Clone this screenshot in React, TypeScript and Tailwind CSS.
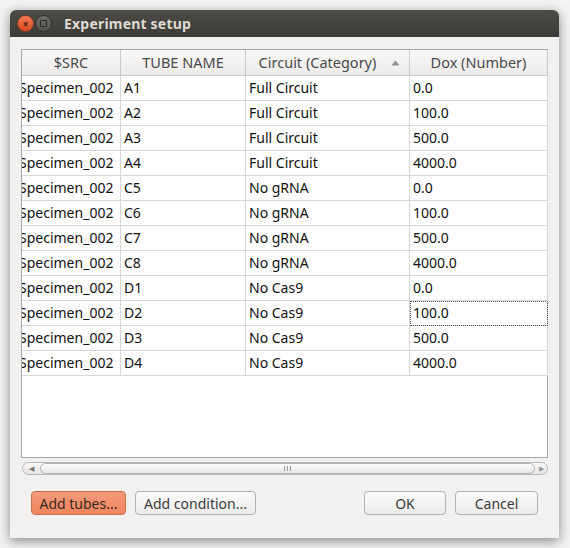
const rows = [
  ['Specimen_002', 'A1', 'Full Circuit', '0.0'],
  ['Specimen_002', 'A2', 'Full Circuit', '100.0'],
  ['Specimen_002', 'A3', 'Full Circuit', '500.0'],
  ['Specimen_002', 'A4', 'Full Circuit', '4000.0'],
  ['Specimen_002', 'C5', 'No gRNA', '0.0'],
  ['Specimen_002', 'C6', 'No gRNA', '100.0'],
  ['Specimen_002', 'C7', 'No gRNA', '500.0'],
  ['Specimen_002', 'C8', 'No gRNA', '4000.0'],
  ['Specimen_002', 'D1', 'No Cas9', '0.0'],
  ['Specimen_002', 'D2', 'No Cas9', '100.0'],
  ['Specimen_002', 'D3', 'No Cas9', '500.0'],
  ['Specimen_002', 'D4', 'No Cas9', '4000.0'],
];

const headers = ['$SRC', 'TUBE NAME', 'Circuit (Category)', 'Dox (Number)'];

const Button = ({ label, primary, w }: { label: string; primary?: boolean; w: string }) => (
  <button
    className={`${w} h-[24px] rounded-[4px] border text-[14px] flex items-center justify-center ${
      primary
        ? 'bg-gradient-to-b from-[#f59a79] to-[#ee8660] border-[#c9714f] text-[#3a2a22]'
        : 'bg-gradient-to-b from-[#fbfbfa] to-[#ecebea] border-[#b3b1ae] text-[#3c3c3c]'
    }`}
  >
    {label}
  </button>
);

const App = () => {
  return (
    <div className="w-[570px] h-[548px] bg-[#f3f3f3] pt-[10px] pl-[10px] overflow-hidden" style={{ fontFamily: '"Noto Sans", "Open Sans", sans-serif' }}>
      <div className="w-[549px] h-[528px] flex flex-col bg-[#f2f1f0] rounded-t-[6px] shadow-[0_3px_12px_rgba(0,0,0,0.45)]">
        {/* Title bar */}
        <div className="h-[27px] shrink-0 rounded-t-[6px] bg-gradient-to-b from-[#4d4c47] to-[#3b3a36] flex items-center pl-[7px]">
          <div className="w-[17px] h-[17px] rounded-full bg-gradient-to-b from-[#f37a52] to-[#d9481c] border border-[#8a3a22] flex items-center justify-center text-[#4a1a0c] text-[10px] leading-none font-bold">
            ×
          </div>
          <div className="w-[17px] h-[17px] ml-[1px] rounded-full bg-gradient-to-b from-[#6c6b66] to-[#55544f] border border-[#2f2e2b] flex items-center justify-center">
            <div className="w-[7px] h-[7px] border border-[#2a2927] rounded-[1px]" />
          </div>
          <span className="ml-[12px] text-[14px] font-bold text-[#dfdbd2] tracking-[0.2px]">Experiment setup</span>
        </div>

        {/* Body */}
        <div className="flex flex-col px-[11px] pt-[12px]">
          <div className="w-[527px] h-[409px] border border-[#a9a8a5] bg-white flex flex-col">
            <div className="grid grid-cols-[99px_125px_164px_138px] h-[26px] bg-gradient-to-b from-[#f8f8f7] to-[#ecebea] text-[14.5px] text-[#4a4a4a]">
              {headers.map((h, i) => (
                <div
                  key={h}
                  className={`border-r border-b border-[#c9c8c5] flex items-center justify-center relative ${i === 2 ? 'pr-[20px]' : ''}`}
                >
                  {h}
                  {i === 2 && (
                    <svg className="absolute right-[9px] top-[10px]" width="9" height="6" viewBox="0 0 9 6">
                      <path d="M4.5 0.5 L8.5 5.5 L0.5 5.5 Z" fill="#8f8f8f" />
                    </svg>
                  )}
                </div>
              ))}
            </div>
            {rows.map((r, ri) => (
              <div key={ri} className="grid grid-cols-[99px_125px_164px_138px] h-[25px] text-[14px] text-[#111]">
                {r.map((c, ci) => (
                  <div
                    key={ci}
                    className={`border-r border-b border-[#d6d6d6] flex items-center overflow-hidden whitespace-nowrap pb-[2px] ${
                      ci === 0 ? 'pl-0' : 'pl-[3px]'
                    } ${ri === 9 && ci === 3 ? 'outline-1 outline-dotted outline-[#555] -outline-offset-1' : ''}`}
                  >
                    <span className={ci === 0 ? '-ml-[3px]' : ''}>{c}</span>
                  </div>
                ))}
              </div>
            ))}
          </div>

          {/* Horizontal scrollbar */}
          <div className="mt-[4px] ml-[1px] w-[526px] h-[13px] rounded-full border border-[#b9b8b6] bg-gradient-to-b from-[#f7f7f6] to-[#e6e5e4] flex items-center">
            <span className="w-[17px] text-[7px] text-[#777] flex justify-center leading-none">◀</span>
            <div className="flex-1 h-[11px] rounded-full border border-[#b4b3b1] bg-gradient-to-b from-[#fdfdfd] to-[#e8e7e6] flex items-center justify-center gap-[2px]">
              <span className="w-[1px] h-[5px] bg-[#999]" />
              <span className="w-[1px] h-[5px] bg-[#999]" />
              <span className="w-[1px] h-[5px] bg-[#999]" />
            </div>
            <span className="w-[12px] text-[7px] text-[#999] flex justify-center leading-none">▶</span>
          </div>

          {/* Buttons */}
          <div className="mt-[16px] flex items-center pl-[10px] pr-[10px]">
            <Button label="Add tubes..." primary w="w-[95px]" />
            <div className="w-[9px]" />
            <Button label="Add condition..." w="w-[121px]" />
            <div className="flex-1" />
            <Button label="OK" w="w-[82px]" />
            <div className="w-[9px]" />
            <Button label="Cancel" w="w-[83px]" />
          </div>
        </div>
      </div>
    </div>
  );
};

export default App;
